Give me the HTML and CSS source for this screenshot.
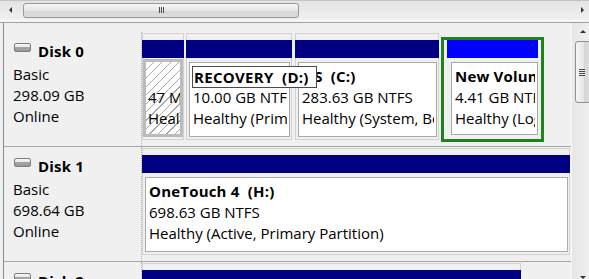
FILE: index.html
```html
<!DOCTYPE html>
<html lang="en">
<head>
    <meta charset="UTF-8">
    <title>Disk Management</title>
    <link rel="stylesheet" href="styles.css">
</head>
<body>
    <!-- horizontal scrollbar -->
    <div class="hscroll">
        <span class="arrow-left"></span>
        <div class="hthumb"><span class="vgrip"></span></div>
        <span class="arrow-right"></span>
    </div>
    <div class="band"></div>

    <div class="main">
        <div class="disks">
            <!-- Disk 0 -->
            <div class="disk">
                <div class="info">
                    <div class="title"><span class="disk-icon"></span>Disk 0</div>
                    <div>Basic</div>
                    <div>298.09 GB</div>
                    <div>Online</div>
                </div>
                <div class="parts">
                    <div class="part free w-p1">
                        <div class="bar"></div>
                        <div class="wrap">
                            <div class="box">
                                <div class="line">&nbsp;</div>
                                <div class="line">47 MB</div>
                                <div class="line">Healthy (OEM Partition)</div>
                            </div>
                        </div>
                    </div>
                    <div class="part w-p2">
                        <div class="bar"></div>
                        <div class="wrap">
                            <div class="box">
                                <div class="line over"><span class="name focus">RECOVERY&nbsp;&nbsp;(D:)</span></div>
                                <div class="line">10.00 GB NTFS</div>
                                <div class="line">Healthy (Primary Partition)</div>
                            </div>
                        </div>
                    </div>
                    <div class="part w-p3">
                        <div class="bar"></div>
                        <div class="wrap">
                            <div class="box">
                                <div class="line name">OS&nbsp;&nbsp;(C:)</div>
                                <div class="line">283.63 GB NTFS</div>
                                <div class="line">Healthy (System, Boot, Page File, Active)</div>
                            </div>
                        </div>
                    </div>
                    <div class="part ext w-p4">
                        <div class="bar"></div>
                        <div class="wrap">
                            <div class="box">
                                <div class="line name">New Volume&nbsp;&nbsp;(E:)</div>
                                <div class="line">4.41 GB NTFS</div>
                                <div class="line">Healthy (Logical Drive)</div>
                            </div>
                        </div>
                    </div>
                </div>
            </div>

            <!-- Disk 1 -->
            <div class="disk">
                <div class="info">
                    <div class="title"><span class="disk-icon"></span>Disk 1</div>
                    <div>Basic</div>
                    <div>698.64 GB</div>
                    <div>Online</div>
                </div>
                <div class="parts">
                    <div class="part w-d1">
                        <div class="bar"></div>
                        <div class="wrap">
                            <div class="box">
                                <div class="line name">OneTouch 4&nbsp;&nbsp;(H:)</div>
                                <div class="line">698.63 GB NTFS</div>
                                <div class="line">Healthy (Active, Primary Partition)</div>
                            </div>
                        </div>
                    </div>
                </div>
            </div>

            <!-- Disk 2 -->
            <div class="disk">
                <div class="info">
                    <div class="title"><span class="disk-icon"></span>Disk 2</div>
                    <div>Basic</div>
                </div>
                <div class="parts">
                    <div class="part w-d2">
                        <div class="bar"></div>
                    </div>
                </div>
            </div>
        </div>

        <!-- vertical scrollbar -->
        <div class="vscroll">
            <div class="btn"><span class="arrow-up"></span></div>
            <div class="vthumb"><span class="hgrip"></span></div>
            <div class="btn bottom"><span class="arrow-down"></span></div>
        </div>
    </div>
</body>
</html>
```

FILE: styles.css
```css
* {
    box-sizing: border-box;
}
body {
    margin: 0;
    width: 589px;
    height: 279px;
    overflow: hidden;
    background: #f0f0f0;
    font-family: "Open Sans", "Segoe UI", sans-serif;
    font-size: 15px;
    color: #000;
}

/* horizontal scrollbar */
.hscroll {
    height: 19px;
    display: flex;
    align-items: center;
    background: linear-gradient(#e4e4e4, #efefef);
    border-top: 1px solid #c4c4c4;
}
.arrow-left {
    margin-left: 9px;
    border-top: 3px solid transparent;
    border-bottom: 3px solid transparent;
    border-right: 3px solid #333;
}
.arrow-right {
    margin-left: auto;
    margin-right: 5px;
    border-top: 3px solid transparent;
    border-bottom: 3px solid transparent;
    border-left: 3px solid #333;
}
.hthumb {
    margin-left: 11px;
    width: 276px;
    height: 15px;
    border: 1px solid #989898;
    border-radius: 3px;
    background: linear-gradient(#f6f6f6, #e6e6e6 50%, #d6d6d6 51%, #dedede);
    display: flex;
    justify-content: center;
    align-items: center;
}
.vgrip {
    width: 5px;
    height: 6px;
    background: repeating-linear-gradient(to right, #4c4c4c 0 1px, transparent 1px 2px);
}
.band {
    height: 4px;
    background: #f4f4f4;
    border-bottom: 1px solid #a0a0a0;
}

/* disk list */
.main {
    display: flex;
    height: 256px;
    margin-left: 3px;
    border-left: 1px solid #8a8a8a;
}
.disks {
    width: 567px;
    flex: none;
    padding-top: 9px;
}
.disk {
    display: flex;
    height: 115px;
    border-bottom: 1px solid #a6a6a6;
}
.info {
    width: 138px;
    flex: none;
    border-right: 1px dotted #b8b8b8;
    padding: 9px 0 0 9px;
    line-height: 21px;
}
.title {
    display: flex;
    align-items: flex-start;
    font-weight: bold;
    letter-spacing: 0.2px;
    margin-bottom: 2px;
}
.disk-icon {
    width: 17px;
    height: 9px;
    margin: 2px 7px 0 1px;
    border: 1px solid #7c7c7c;
    border-radius: 2px;
    background: linear-gradient(#fafafa 0, #e8e8e8 40%, #a8a8a8 45%, #9a9a9a 100%);
}

/* partitions */
.parts {
    display: flex;
    align-items: flex-start;
}
.part {
    flex: none;
    height: 107px;
    margin-top: 1px;
    padding-top: 6px;
    border: 1px solid #d2d2d2;
}
.bar {
    height: 18px;
    margin: 0 -1px;
    background: #000080;
}
.wrap {
    padding: 4px 1px 2px 2px;
}
.box {
    height: 75px;
    border: 1px solid #aaaaaa;
    background: #fff;
    padding: 3px 2px 0 3px;
    line-height: 21px;
}
.line {
    height: 21px;
    white-space: nowrap;
    overflow: hidden;
}
.line.over {
    overflow: visible;
}
.name {
    font-weight: bold;
    letter-spacing: 0.2px;
}
.focus {
    display: inline-block;
    position: relative;
    z-index: 2;
    line-height: 20px;
    letter-spacing: 0.3px;
    margin-left: -1px;
    padding: 0 7px 0 1px;
    border: 1px solid #4a4a4a;
    background: #fff;
}

.w-p1 { width: 42px; }
.w-p2 { width: 106px; margin-left: 2px; }
.w-p3 { width: 144px; margin-left: 3px; }
.w-p4 { width: 103px; margin-left: 2px; }
.w-d1 { width: 428px; }
.w-d2 { width: 379px; }

.part.free .box {
    height: 78px;
    margin: -3px -1px 0 -2px;
    border: 3px solid #bbbbbb;
    padding: 4px 0 0 2px;
    background: repeating-linear-gradient(135deg, #fff 0 5px, #a9a9a9 5px 6px);
}
.part.ext {
    height: 105px;
    margin-top: 5px;
    padding-top: 0;
    border: 3px solid #1e821e;
}
.part.ext .bar {
    margin: 0 3px;
    background: #0000ff;
}
.part.ext .wrap {
    padding: 4px 3px 0 7px;
}
.part.ext .box {
    height: 73px;
}

/* vertical scrollbar */
.vscroll {
    width: 18px;
    flex: none;
    display: flex;
    flex-direction: column;
    background: linear-gradient(to right, #e6e6e6, #efefef);
    border-left: 1px solid #f8f8f8;
}
.btn {
    height: 17px;
    display: flex;
    align-items: center;
    justify-content: center;
    padding-left: 5px;
}
.btn.bottom {
    margin-top: auto;
    height: 10px;
    align-items: flex-end;
}
.arrow-up {
    border-left: 3px solid transparent;
    border-right: 3px solid transparent;
    border-bottom: 3px solid #333;
}
.arrow-down {
    border-left: 3px solid transparent;
    border-right: 3px solid transparent;
    border-top: 3px solid #333;
}
.vthumb {
    margin: 1px 0 0 3px;
    width: 17px;
    height: 62px;
    border: 1px solid #909090;
    border-radius: 3px;
    background: linear-gradient(to right, #f6f6f6, #e6e6e6 50%, #d6d6d6 51%, #dedede);
    display: flex;
    align-items: center;
    padding-left: 3px;
}
.hgrip {
    width: 6px;
    height: 7px;
    background: repeating-linear-gradient(#4c4c4c 0 1px, transparent 1px 2px);
}
```
